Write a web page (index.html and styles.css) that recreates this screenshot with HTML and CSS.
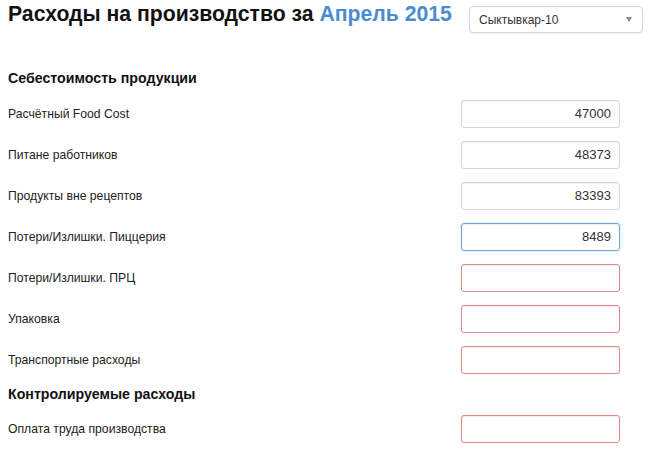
FILE: index.html
```html
<!DOCTYPE html>
<html>
<head>
<meta charset="utf-8">
<link rel="stylesheet" href="styles.css">
</head>
<body>
<div class="page">
  <div class="header">
    <h1 class="title">Расходы на производство за <span class="month">Апрель 2015</span></h1>
    <div class="select">
      <span>Сыктывкар-10</span>
      <span class="caret"></span>
    </div>
  </div>

  <h2 class="section first">Себестоимость продукции</h2>
  <div class="rows">
    <div class="row"><span class="label">Расчётный Food Cost</span><div class="input">47000</div></div>
    <div class="row"><span class="label">Питане работников</span><div class="input">48373</div></div>
    <div class="row"><span class="label">Продукты вне рецептов</span><div class="input">83393</div></div>
    <div class="row"><span class="label">Потери/Излишки. Пиццерия</span><div class="input focus">8489</div></div>
    <div class="row"><span class="label">Потери/Излишки. ПРЦ</span><div class="input error"></div></div>
    <div class="row"><span class="label">Упаковка</span><div class="input error"></div></div>
    <div class="row"><span class="label">Транспортные расходы</span><div class="input error"></div></div>
  </div>

  <h2 class="section second">Контролируемые расходы</h2>
  <div class="rows">
    <div class="row"><span class="label">Оплата труда производства</span><div class="input error"></div></div>
  </div>
</div>
</body>
</html>
```

FILE: styles.css
```css
html, body {
  margin: 0;
  padding: 0;
  background: #fff;
}
body {
  font-family: "Liberation Sans", Arial, sans-serif;
  color: #111;
}
.page {
  padding: 6px 7px 0 8px;
}
.header {
  display: flex;
  justify-content: space-between;
  align-items: center;
  height: 27px;
}
.title {
  margin: 0;
  font-size: 21.2px;
  font-weight: bold;
  line-height: 27px;
  color: #111;
  position: relative;
  top: -6px;
  white-space: nowrap;
}
.month {
  color: #4a8dcf;
}
.select {
  box-sizing: border-box;
  width: 174px;
  height: 27px;
  flex: none;
  border: 1px solid #d4d4d4;
  border-radius: 4px;
  display: flex;
  align-items: center;
  justify-content: space-between;
  padding: 0 10px 0 9px;
  font-size: 12px;
  color: #333;
  box-shadow: 0 1px 1px rgba(0,0,0,0.06);
}
.caret {
  width: 0;
  height: 0;
  border-left: 3px solid transparent;
  border-right: 3px solid transparent;
  border-top: 5px solid #888;
}
.section {
  margin: 0;
  font-size: 14.2px;
  font-weight: bold;
  line-height: 18px;
  color: #111;
}
.section.first {
  margin-top: 36px;
  margin-bottom: 13px;
}
.section.second {
  margin-top: 11px;
  margin-bottom: 12px;
}
.rows {
  display: flex;
  flex-direction: column;
  gap: 13px;
  padding-right: 23px;
}
.row {
  display: flex;
  justify-content: space-between;
  align-items: center;
  height: 28px;
}
.label {
  font-size: 12.2px;
  color: #222;
}
.input {
  box-sizing: border-box;
  width: 159px;
  height: 28px;
  border: 1px solid #d6d6d6;
  border-radius: 3px;
  box-shadow: inset 0 1px 1px rgba(0,0,0,0.06);
  font-size: 13px;
  color: #333;
  text-align: right;
  line-height: 26px;
  padding-right: 8px;
}
.input.focus {
  border-color: #6ea5dc;
  box-shadow: inset 0 1px 1px rgba(0,0,0,0.06), 0 0 2px rgba(102,175,233,0.5);
}
.input.error {
  border-color: #de8680;
}
```
